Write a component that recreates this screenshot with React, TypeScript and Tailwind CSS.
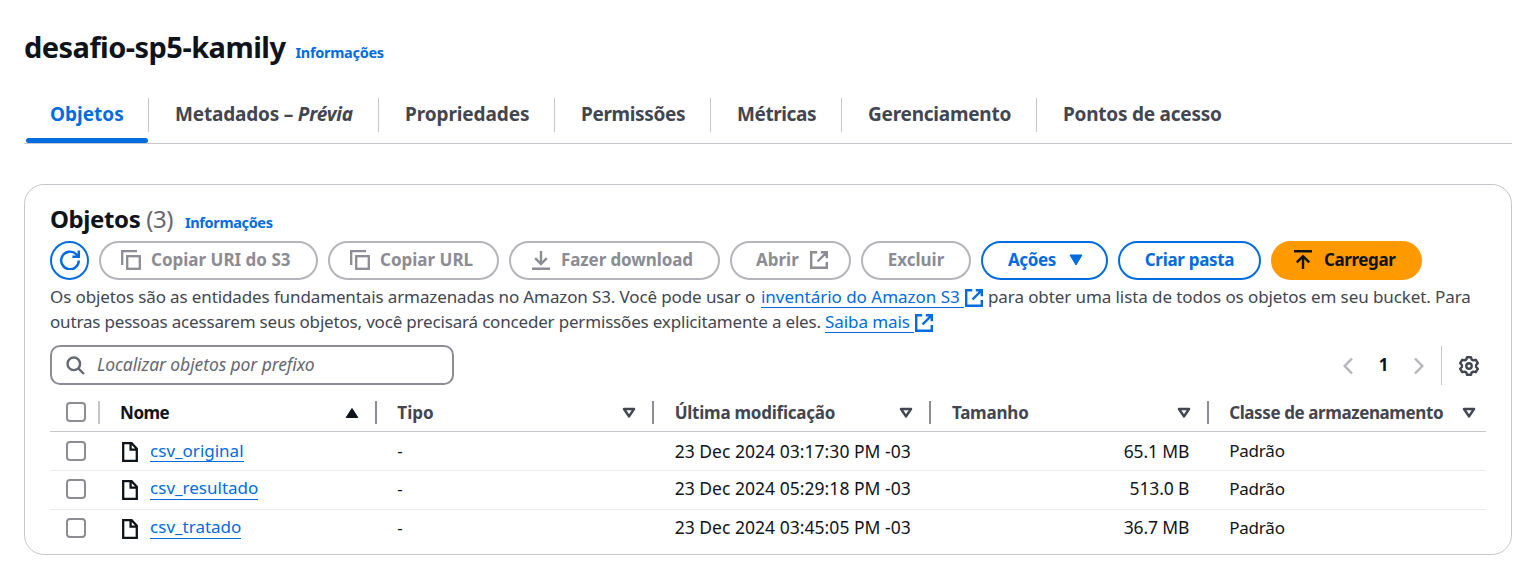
import React from 'react';

type IconProps = { className?: string };

const CopyIcon = ({ className = '' }: IconProps) => (
  <svg viewBox="0 0 20 20" className={`-mt-px size-5 shrink-0 ${className}`} fill="none" stroke="currentColor" strokeWidth="2.3">
    <path d="M1.2 15V1.2H16" />
    <rect x="6.2" y="6.2" width="12.6" height="12.6" />
  </svg>
);

const RefreshIcon = () => (
  <svg viewBox="0 0 20 20" className="-mt-px size-5 shrink-0" fill="none" stroke="currentColor" strokeWidth="2.4">
    <path d="M18.8 10.5A8.8 8.8 0 1 1 16.2 4.2L18 6.2" />
    <path d="M18.8 0.5V6.8H12.4" />
  </svg>
);

const DownloadIcon = () => (
  <svg viewBox="0 0 20 20" className="-mt-px size-5 shrink-0" fill="none" stroke="currentColor" strokeWidth="2.4">
    <path d="M10 1V14M4.2 8.2 10 14l5.8-5.8M1 18.8H19" />
  </svg>
);

const UploadIcon = () => (
  <svg viewBox="0 0 20 20" className="-mt-px size-5 shrink-0" fill="none" stroke="currentColor" strokeWidth="2.4">
    <path d="M10 19V6.5M3.8 12.4 10 6.2l6.2 6.2M1 1.2H19" />
  </svg>
);

const ExternalIcon = ({ className = '' }: IconProps) => (
  <svg viewBox="0 0 18 18" className={`size-[18px] shrink-0 ${className}`} fill="none" stroke="currentColor" strokeWidth="2.4">
    <path d="M7.2 1.2H1.2V16.8H16.8V11M10.8 1.2H16.8V7.2M16.8 1.2 7.5 10.5" />
  </svg>
);

const FileIcon = () => (
  <svg viewBox="0 0 16 20" className="mt-0.5 h-5 w-4 shrink-0" fill="none" stroke="#0f141a" strokeWidth="2.3">
    <path d="M1.2 1.2H9.6L14.8 6.6V18.8H1.2ZM8.6 1.2V7.6H14.8" />
  </svg>
);

const GearIcon = () => (
  <svg viewBox="0 0 20 20" className="mt-0.5 size-5 shrink-0" fill="none" stroke="#424650" strokeWidth="2.4" strokeLinejoin="round">
    <path d="M8 1.2H12L12.6 3.4 14.3 4.4 16.8 3.8 18.8 7.2 17.1 9V11L18.8 12.8 16.8 16.2 14.3 15.6 12.6 16.6 12 18.8H8L7.4 16.6 5.7 15.6 3.2 16.2 1.2 12.8 2.9 11V9L1.2 7.2 3.2 3.8 5.7 4.4 7.4 3.4Z" />
    <circle cx="10" cy="10" r="2.7" />
  </svg>
);

const SortDown = () => (
  <svg viewBox="0 0 14 12" className="mt-0.5 h-3 w-3.5 shrink-0" fill="none" stroke="#424650" strokeWidth="2.5" strokeLinejoin="round">
    <path d="M2 2H12L7 9.4Z" />
  </svg>
);

const SortUp = () => (
  <svg viewBox="0 0 14 12" className="mt-0.5 h-3 w-3.5 shrink-0" fill="#0f141a" stroke="#0f141a" strokeLinejoin="round">
    <path d="M1.2 10.5H12.8L7 1.5Z" />
  </svg>
);

const tabs = [
  { label: <>Metadados – <i>Prévia</i></>, width: 'w-[230px]', track: 'tracking-[-0.19px]' },
  { label: 'Propriedades', width: 'w-[176px]', track: 'tracking-[-0.1px]' },
  { label: 'Permissões', width: 'w-[156px]', track: 'tracking-[-0.35px]' },
  { label: 'Métricas', width: 'w-[131px]', track: 'tracking-[-0.42px]' },
  { label: 'Gerenciamento', width: 'w-[195px]', track: 'tracking-[-0.23px]' },
  { label: 'Pontos de acesso', width: 'w-[211px]', track: 'tracking-[-0.23px]' },
];

const Pill = ({ className, children }: { className: string; children: React.ReactNode }) => (
  <button className={`flex h-[39px] shrink-0 items-center rounded-full border-2 text-[17px] leading-none font-bold whitespace-nowrap ${className}`}>
    {children}
  </button>
);

const Label = ({ className = '', children }: { className?: string; children: React.ReactNode }) => (
  <span className={`pb-0.5 ${className}`}>{children}</span>
);

const muted = 'border-[#b4b4bb] text-[#8c8c94]';
const active = 'border-[#006ce0] text-[#006ce0]';

const Checkbox = () => <span className="ml-[15.5px] block size-5 shrink-0 rounded-[4px] border-2 border-[#8c8c94]" />;

const columns = [
  { label: 'Nome', sorted: true, track: 'tracking-[-0.5px]' },
  { label: 'Tipo', track: 'tracking-normal' },
  { label: 'Última modificação', track: 'tracking-[-0.24px]' },
  { label: 'Tamanho', track: 'tracking-[-0.2px]' },
  { label: 'Classe de armazenamento', track: 'tracking-[-0.4px]' },
];

const rows = [
  { name: 'csv_original', date: '23 Dec 2024 03:17:30 PM -03', size: '65.1 MB', box: 'h-[39px] border-b' },
  { name: 'csv_resultado', date: '23 Dec 2024 05:29:18 PM -03', size: '513.0 B', box: 'h-[39px] border-b pb-[3px]' },
  { name: 'csv_tratado', date: '23 Dec 2024 03:45:05 PM -03', size: '36.7 MB', box: 'h-[35px]' },
];

const grid = 'grid grid-cols-[49.6px_repeat(5,277.28px)] items-center';

export default function App() {
  return (
    <main className="h-[587px] w-[1538px] overflow-hidden bg-white px-6 pt-[27px] font-['Noto_Sans',sans-serif] text-[#0f141a]">
      <header className="flex h-10 items-baseline leading-10">
        <h1 className="w-[271.5px] text-[29px] font-bold tracking-[-0.54px] whitespace-nowrap">desafio-sp5-kamily</h1>
        <a className="text-[14.5px] font-bold tracking-[-0.3px] text-[#006ce0]">Informações</a>
      </header>

      <nav className="mt-[31px] flex h-[46px] w-[1488px] items-start border-b border-[#c6c6cd] text-[19px] font-bold text-[#424650]">
        <div className="flex h-[45px] w-[125px] flex-col pl-0.5">
          <div className="flex h-[34px] items-center border-r border-[#c6c6cd] pb-0.5 pl-6 leading-none text-[#006ce0]">
            Objetos
          </div>
          <div className="mt-[6px] h-[5px] w-[122px] rounded-full bg-[#006ce0]" />
        </div>
        {tabs.map((t, i) => (
          <div
            key={i}
            className={`flex h-[34px] shrink-0 items-center border-[#c6c6cd] pb-0.5 pl-[26px] leading-none whitespace-pre ${t.width} ${t.track} ${i < tabs.length - 1 ? 'border-r' : ''}`}
          >
            <span>{t.label}</span>
          </div>
        ))}
      </nav>

      <section className="mt-10 h-[371px] w-[1488px] rounded-[20px] border border-[#c6c6cd] px-[25px] pt-[17px]">
        <div className="flex h-[39px] items-baseline leading-[34px]">
          <h2 className="w-[135px] text-[24px] font-bold tracking-[-0.4px] whitespace-nowrap">
            Objetos <span className="font-normal text-[#656871]">(3)</span>
          </h2>
          <a className="text-[14.5px] font-bold tracking-[-0.36px] text-[#006ce0]">Informações</a>
        </div>

        <div className="flex gap-2.5">
          <Pill className={`w-[39px] justify-center ${active}`}><RefreshIcon /></Pill>
          <Pill className={`w-[219px] gap-2.5 pl-5 ${muted}`}><CopyIcon /><Label>Copiar URI do S3</Label></Pill>
          <Pill className={`w-[171px] gap-2.5 pl-5 ${muted}`}><CopyIcon /><Label>Copiar URL</Label></Pill>
          <Pill className={`w-[211px] gap-2.5 pl-5 ${muted}`}><DownloadIcon /><Label className="tracking-[-0.1px]">Fazer download</Label></Pill>
          <Pill className={`w-[121px] justify-between pr-[21px] pl-6 ${muted}`}><Label>Abrir</Label><ExternalIcon className="-mt-px" /></Pill>
          <Pill className={`w-[110px] justify-center ${muted}`}><Label>Excluir</Label></Pill>
          <Pill className={`w-[127px] justify-between pr-[23px] pl-[25px] ${active}`}>
            <Label className="tracking-[-0.4px]">Ações</Label>
            <svg viewBox="0 0 14 12" className="-mt-px h-3 w-3.5" fill="currentColor" stroke="currentColor" strokeLinejoin="round">
              <path d="M1 1H13L7 11Z" />
            </svg>
          </Pill>
          <Pill className={`w-[143px] justify-center ${active}`}><Label className="tracking-[-0.3px]">Criar pasta</Label></Pill>
          <Pill className="w-[151px] gap-[11px] border-[#ff9900] bg-[#ff9900] pl-5 text-[#0f141a]"><UploadIcon /><Label className="tracking-[-0.4px]">Carregar</Label></Pill>
        </div>

        <div className="mt-1 text-[17px] leading-[25px] whitespace-nowrap text-[#424650]">
          <p className="flex items-center">
            <span className="w-[711px] tracking-[-0.12px]">Os objetos são as entidades fundamentais armazenadas no Amazon S3. Você pode usar o</span>
            <a className="flex h-[22px] w-[203px] items-center border-b border-[#006ce0] tracking-[-0.02px] text-[#006ce0]">inventário do Amazon S3</a>
            <ExternalIcon className="mt-0.5 ml-px text-[#006ce0]" />
            <span className="ml-[5px] tracking-[-0.09px]">para obter uma lista de todos os objetos em seu bucket. Para</span>
          </p>
          <p className="flex items-center">
            <span className="w-[775px] tracking-[-0.18px]">outras pessoas acessarem seus objetos, você precisará conceder permissões explicitamente a eles.</span>
            <a className="flex h-[22px] w-[89px] items-center border-b border-[#006ce0] tracking-[-0.08px] text-[#006ce0]">Saiba mais</a>
            <ExternalIcon className="mt-0.5 ml-px text-[#006ce0]" />
          </p>
        </div>

        <div className="mt-[11px] flex h-10 items-center">
          <div className="flex h-10 w-[404px] items-center gap-3 rounded-[10px] border-2 border-[#8c8c94] pl-3.5 text-[17.5px] tracking-[-0.1px] text-[#656871] italic">
            <svg viewBox="0 0 19 19" className="size-[19px]" fill="none" stroke="#656871" strokeWidth="2.4">
              <circle cx="7.8" cy="7.8" r="6.3" />
              <path d="m12.3 12.3 5.7 5.7" />
            </svg>
            <span className="pb-0.5">Localizar objetos por prefixo</span>
          </div>
          <div className="ml-auto flex items-center pr-[7px]">
            <svg viewBox="0 0 10 18" className="mt-0.5 h-[18px] w-2.5" fill="none" stroke="#b4b4bb" strokeWidth="2.4">
              <path d="M9 1.5 1.7 9 9 16.5" />
            </svg>
            <span className="w-[61px] text-center text-[17px] font-bold">1</span>
            <svg viewBox="0 0 10 18" className="mt-0.5 h-[18px] w-2.5" fill="none" stroke="#b4b4bb" strokeWidth="2.4">
              <path d="m1 1.5 7.3 7.5L1 16.5" />
            </svg>
            <span className="mr-[17px] ml-[17px] h-[39px] w-px bg-[#c6c6cd]" />
            <GearIcon />
          </div>
        </div>

        <div className="w-[1436px] text-[17px] whitespace-nowrap">
          <div className={`${grid} h-[47px] border-b border-[#c6c6cd] pt-2 font-bold text-[#424650]`}>
            <div className="flex h-[23px] items-center border-r-2 border-[#c6c6cd]"><Checkbox /></div>
            {columns.map((c, i) => (
              <div
                key={c.label}
                className={`flex h-[23px] items-center justify-between pl-[20.5px] ${i < 4 ? 'border-r-2 border-[#8c8c94] pr-4' : 'pr-2.5'} ${c.track} ${c.sorted ? 'text-[#0f141a]' : ''}`}
              >
                <span className="pt-px">{c.label}</span>
                {c.sorted ? <SortUp /> : <SortDown />}
              </div>
            ))}
          </div>
          {rows.map((r) => (
            <div key={r.name} className={`${grid} border-[#ebebf0] ${r.box}`}>
              <Checkbox />
              <div className="flex items-center gap-3 pl-[22.5px]">
                <FileIcon />
                <a className="flex h-[22px] items-center border-b border-[#006ce0] text-[#006ce0]">{r.name}</a>
              </div>
              <div className="pl-[20.5px]">-</div>
              <div className="pl-[20.5px] text-[17.5px] tracking-[0.03px]">{r.date}</div>
              <div className="pr-[19.5px] text-right text-[17.5px] tracking-[-0.15px]">{r.size}</div>
              <div className="pl-[20.5px] tracking-[-0.2px]">Padrão</div>
            </div>
          ))}
        </div>
      </section>
    </main>
  );
}
